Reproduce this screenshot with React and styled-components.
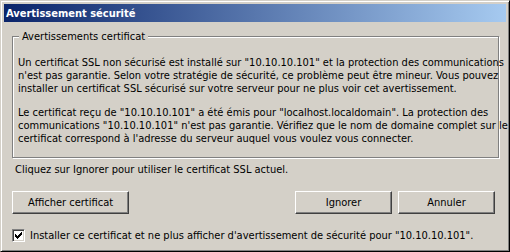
import React from 'react';
import styled, { createGlobalStyle } from 'styled-components';

const GlobalStyle = createGlobalStyle`
  html, body {
    margin: 0;
    padding: 0;
    background: #d4d0c8;
  }
  body {
    font-family: "DejaVu Sans Condensed", "Liberation Sans", sans-serif;
    font-size: 11px;
    color: #000;
  }
`;

const Window = styled.div`
  box-sizing: border-box;
  width: 510px;
  height: 252px;
  padding: 3px;
  background: #d4d0c8;
  border: 1px solid;
  border-color: #d4d0c8 #000 #000 #d4d0c8;
  box-shadow: inset 1px 1px 0 #fff, inset -1px -1px 0 #808080;
  display: flex;
  flex-direction: column;
`;

const TitleBar = styled.div`
  height: 18px;
  flex: none;
  display: flex;
  align-items: center;
  padding-left: 2px;
  background: linear-gradient(to right, #0a246a, #a6caf0);
  color: #fff;
  font-weight: bold;
  font-size: 11px;
`;

const Body = styled.div`
  padding: 14px 8px 0 8px;
  display: flex;
  flex-direction: column;
`;

// etched frame: dark line with a white line just inside/under it
const GroupBox = styled.div`
  box-sizing: border-box;
  height: 122px;
  margin-right: -1px;
  padding: 0 5px;
  border: 1px solid #808080;
  box-shadow: 1px 1px 0 #fff, inset 1px 1px 0 #fff;
  display: flex;
  flex-direction: column;
  align-items: flex-start;
`;

const Legend = styled.div`
  margin: -7px 0 0 1px;
  padding: 0 3px;
  line-height: 13px;
  background: #d4d0c8;
`;

const Paragraph = styled.p`
  margin: ${p => p.$top}px 0 0 0;
  line-height: 13px;
  white-space: nowrap;
`;

const Hint = styled.div`
  margin-top: 5px;
  line-height: 13px;
  padding-left: 3px;
`;

const ButtonRow = styled.div`
  display: flex;
  margin: 15px 3px 0 0;
  gap: 6px;
`;

const Spacer = styled.div`
  flex: 1;
`;

const Button = styled.button`
  box-sizing: border-box;
  width: ${p => p.$width || 97}px;
  height: 23px;
  padding: 0;
  font: inherit;
  color: #000;
  background: #d4d0c8;
  border: 1px solid;
  border-color: #fff #404040 #404040 #fff;
  box-shadow: inset -1px -1px 0 #808080;
`;

const CheckRow = styled.label`
  display: flex;
  align-items: center;
  gap: 5px;
  margin-top: 15px;
  line-height: 13px;
`;

const CheckBox = styled.span`
  box-sizing: border-box;
  width: 13px;
  height: 13px;
  flex: none;
  background: #fff;
  border: 1px solid;
  border-color: #808080 #fff #fff #808080;
  box-shadow: inset 1px 1px 0 #404040, inset -1px -1px 0 #d4d0c8;
  display: flex;
  align-items: center;
  justify-content: center;
`;

const CheckMark = () => (
  <svg width="7" height="7" viewBox="0 0 7 7" shapeRendering="crispEdges">
    <path d="M0 2h1v1h1v1h1v-1h1v-1h1v-1h1v-1h1v3h-1v1h-1v1h-1v1h-1v1h-1v-1h-1v-1h-1z" fill="#000" />
  </svg>
);

export default function App() {
  return (
    <>
      <GlobalStyle />
      <Window>
        <TitleBar>Avertissement sécurité</TitleBar>
        <Body>
          <GroupBox>
            <Legend>Avertissements certificat</Legend>
            <Paragraph $top={13}>
              Un certificat SSL non sécurisé est installé sur "10.10.10.101" et la protection des communications<br />
              n'est pas garantie. Selon votre stratégie de sécurité, ce problème peut être mineur. Vous pouvez<br />
              installer un certificat SSL sécurisé sur votre serveur pour ne plus voir cet avertissement.
            </Paragraph>
            <Paragraph $top={11}>
              Le certificat reçu de "10.10.10.101" a été émis pour "localhost.localdomain". La protection des<br />
              communications "10.10.10.101" n'est pas garantie. Vérifiez que le nom de domaine complet sur le<br />
              certificat correspond à l'adresse du serveur auquel vous voulez vous connecter.
            </Paragraph>
          </GroupBox>
          <Hint>Cliquez sur Ignorer pour utiliser le certificat SSL actuel.</Hint>
          <ButtonRow>
            <Button $width={117}>Afficher certificat</Button>
            <Spacer />
            <Button>Ignorer</Button>
            <Button>Annuler</Button>
          </ButtonRow>
          <CheckRow>
            <CheckBox><CheckMark /></CheckBox>
            Installer ce certificat et ne plus afficher d'avertissement de sécurité pour "10.10.10.101".
          </CheckRow>
        </Body>
      </Window>
    </>
  );
}
